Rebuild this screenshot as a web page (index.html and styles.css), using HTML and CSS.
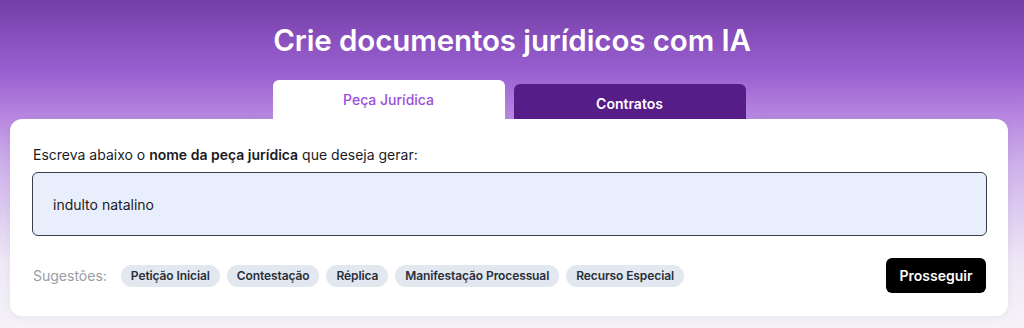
FILE: index.html
```html
<!DOCTYPE html>
<html lang="pt-BR">
<head>
  <meta charset="UTF-8">
  <meta name="viewport" content="width=device-width, initial-scale=1.0">
  <title>Crie documentos jurídicos com IA</title>
  <link rel="stylesheet" href="styles.css">
</head>
<body>
  <h1 class="title">Crie documentos jurídicos com IA</h1>

  <div class="tabs">
    <button type="button" class="tab active">Peça Jurídica</button>
    <button type="button" class="tab">Contratos</button>
  </div>

  <form class="card" id="doc-form">
    <label class="prompt" for="doc-name">Escreva abaixo o <strong>nome da peça jurídica</strong> que deseja gerar:</label>
    <input class="doc-input" id="doc-name" type="text" value="indulto natalino">

    <div class="actions">
      <div class="suggestions">
        <span class="suggestions-label">Sugestões:</span>
        <span class="chip">Petição Inicial</span>
        <span class="chip">Contestação</span>
        <span class="chip">Réplica</span>
        <span class="chip">Manifestação Processual</span>
        <span class="chip">Recurso Especial</span>
      </div>
      <button type="button" class="next">Prosseguir</button>
    </div>
  </form>
</body>
</html>
```

FILE: styles.css
```css
body {
  margin: 0;
  min-height: 328px;
  font-family: Inter, "Noto Sans", sans-serif;
  background: linear-gradient(180deg, #743fa8 0%, #9a5fd0 22%, #b888e0 36%, #cdb0ea 50%, #eee8f6 80%, #f5f3f8 100%);
  color: #1b1b1f;
}
.title {
  margin: 0;
  padding-top: 22px;
  text-align: center;
  color: #fff;
  font-size: 29.5px;
  line-height: 36px;
  font-weight: 600;
  letter-spacing: -0.1px;
}
.tabs {
  display: flex;
  justify-content: center;
  align-items: flex-end;
  gap: 9px;
  margin: 22px 16px 0 10px;
}
.tab {
  width: 232px;
  height: 35px;
  border: none;
  border-radius: 6px 6px 0 0;
  background-color: #561c88;
  color: #fff;
  font-family: inherit;
  font-size: 14px;
  font-weight: 600;
  padding: 3px 0 0;
}
.tab.active {
  height: 39px;
  background-color: #fff;
  color: #9a4fd8;
  font-weight: 500;
  padding: 0 0 1px;
}
.card {
  margin: 0 16px 0 10px;
  padding: 26px 21px 23px 22px;
  background-color: #fff;
  border-radius: 12px;
  box-shadow: 0 2px 8px rgba(60, 40, 90, 0.06);
}
.prompt {
  display: block;
  margin-left: 1px;
  font-size: 14px;
  line-height: 20px;
}
.prompt strong {
  font-weight: 600;
}
.doc-input {
  display: block;
  box-sizing: border-box;
  width: 100%;
  height: 64px;
  margin-top: 7px;
  padding: 0 20px;
  border: 1px solid #3a3d48;
  border-radius: 6px;
  background-color: #e8eefb;
  font-family: inherit;
  font-size: 14px;
  color: #1b1b1f;
  outline: none;
}
.actions {
  display: flex;
  justify-content: space-between;
  align-items: center;
  margin-top: 22px;
}
.suggestions {
  display: flex;
  align-items: center;
  gap: 7px;
  margin-left: 1px;
}
.suggestions-label {
  margin-right: 7px;
  font-size: 14px;
  color: #9c9ca4;
}
.chip {
  height: 22px;
  line-height: 22px;
  padding: 0 10px;
  border-radius: 11px;
  background-color: #e2e8f0;
  color: #2a2f3a;
  font-size: 12px;
  font-weight: 600;
  letter-spacing: -0.1px;
}
.next {
  width: 100px;
  height: 35px;
  margin-right: 1px;
  border: none;
  border-radius: 6px;
  background-color: #000;
  color: #fff;
  font-family: inherit;
  font-size: 14px;
  font-weight: 600;
}
```
